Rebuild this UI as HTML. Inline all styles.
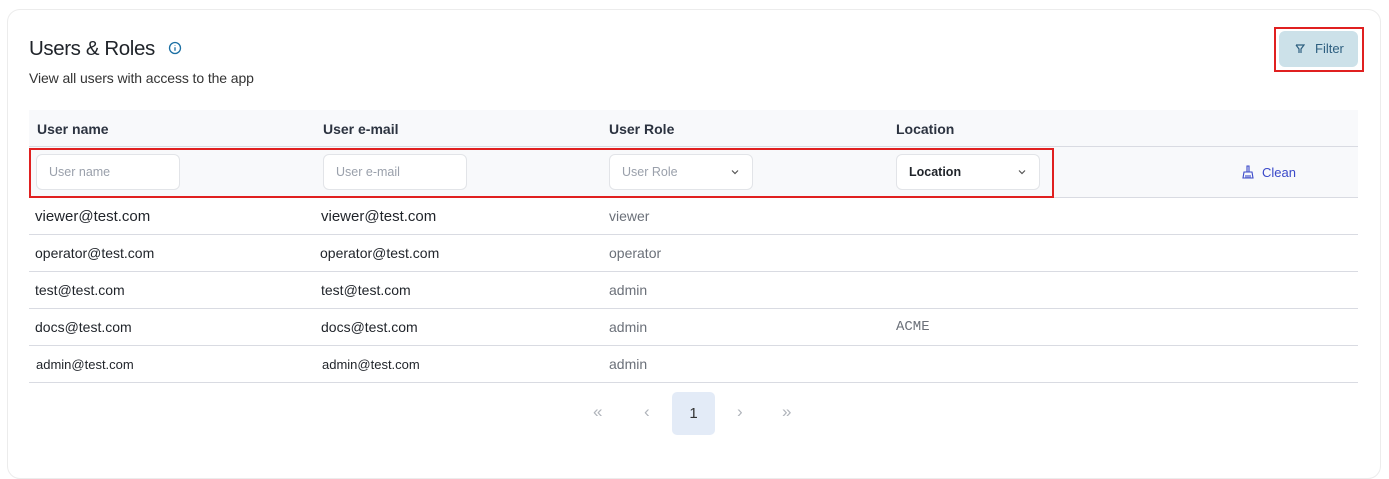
<!DOCTYPE html><html><head><style>
*{box-sizing:border-box;margin:0;padding:0}
body{width:1389px;height:458px;background:#fff;font-family:"Liberation Sans",sans-serif;position:relative;overflow:hidden;color:#1f2329}
.a{position:absolute}
.card{left:7px;top:9px;width:1374px;height:470px;border:1px solid #ececec;border-radius:13px;background:#fff}
.hd{font-size:14px;font-weight:bold;color:#2c3340}
.inp{background:#fff;border:1px solid #e2e4e8;border-radius:6px;height:36px;width:144px;top:154px;font-size:12.5px;color:#9aa0ab;padding:0 12px;line-height:34px}
.r{font-size:14px;color:#1f2329}
.g{font-size:14px;color:#6b7079}
.ln{left:29px;width:1329px;height:1px;background:#d9dbe2}
.chev{position:absolute;right:12px;top:12px}
.pg{font-size:17px;color:#b0b4bb}
</style></head><body>
<div class="a card"></div>
<div class="a" style="left:29px;top:37px;font-size:20.5px;letter-spacing:-0.4px;color:#1f2329">Users &amp; Roles</div>
<svg class="a" style="left:168px;top:41px" width="14" height="14" viewBox="0 0 14 14"><circle cx="7" cy="7" r="5.5" fill="none" stroke="#1b6fa3" stroke-width="1.3"/><path d="M7 6.3v3.5M7 4.2v.6" stroke="#1b6fa3" stroke-width="1.3"/></svg>
<div class="a" style="left:29px;top:70px;font-size:14px;letter-spacing:-0.1px;color:#333">View all users with access to the app</div>
<div class="a" style="left:1274px;top:27px;width:90px;height:45px;border:2px solid #e02020"></div>
<div class="a" style="left:1279px;top:31px;width:79px;height:36px;background:#cce1e9;border-radius:6px;font-size:13px;color:#2d5f80;line-height:36px;padding-left:36px">Filter</div>
<svg class="a" style="left:1295px;top:44px" width="10" height="10" viewBox="0 0 10 10"><path d="M1 1h8L6 5v4M4 9V5L1 1" fill="none" stroke="#2d5f80" stroke-width="1.2"/></svg>
<div class="a" style="left:29px;top:110px;width:1329px;height:87px;background:#f8f9fb"></div>
<div class="a ln" style="top:146px"></div>
<div class="a ln" style="top:197px"></div>
<div class="a hd" style="left:37px;top:121px">User name</div>
<div class="a hd" style="left:323px;top:121px">User e-mail</div>
<div class="a hd" style="left:609px;top:121px">User Role</div>
<div class="a hd" style="left:896px;top:121px">Location</div>
<div class="a" style="left:29px;top:148px;width:1025px;height:50px;border:2px solid #e02020"></div>
<div class="a inp" style="left:36px">User name</div>
<div class="a inp" style="left:323px">User e-mail</div>
<div class="a inp" style="left:609px">User Role<svg class="chev" width="10" height="10" viewBox="0 0 10 10"><path d="M2 3.5l3 3 3-3" fill="none" stroke="#555" stroke-width="1.2"/></svg></div>
<div class="a inp" style="left:896px;color:#1f2329;font-weight:bold;font-size:12.5px">Location<svg class="chev" width="10" height="10" viewBox="0 0 10 10"><path d="M2 3.5l3 3 3-3" fill="none" stroke="#555" stroke-width="1.2"/></svg></div>
<svg class="a" style="left:1242px;top:165px" width="12" height="14" viewBox="0 0 12 14"><path d="M5 1h2v6h3l1 6H1l1-6h3zM2 7h8M4 10v3M6 10v3M8 10v3" fill="none" stroke="#3a49c9" stroke-width="1.1"/></svg>
<div class="a" style="left:1262px;top:165px;font-size:13px;color:#3a49c9">Clean</div>
<div class="a r" style="left:35px;top:208px;font-size:15px">viewer@test.com</div><div class="a r" style="left:321px;top:208px;font-size:15px">viewer@test.com</div><div class="a g" style="left:609px;top:208px">viewer</div>
<div class="a ln" style="top:234px"></div>
<div class="a r" style="left:35px;top:245px">operator@test.com</div><div class="a r" style="left:320px;top:245px">operator@test.com</div><div class="a g" style="left:609px;top:245px">operator</div>
<div class="a ln" style="top:271px"></div>
<div class="a r" style="left:35px;top:282px">test@test.com</div><div class="a r" style="left:321px;top:282px">test@test.com</div><div class="a g" style="left:609px;top:282px">admin</div>
<div class="a ln" style="top:308px"></div>
<div class="a r" style="left:35px;top:319px">docs@test.com</div><div class="a r" style="left:321px;top:319px">docs@test.com</div><div class="a g" style="left:609px;top:319px">admin</div><div class="a g" style="left:896px;top:319px;font-family:'Liberation Mono',monospace">ACME</div>
<div class="a ln" style="top:345px"></div>
<div class="a r" style="left:36px;top:357px;font-size:13px">admin@test.com</div><div class="a r" style="left:322px;top:357px;font-size:13px">admin@test.com</div><div class="a g" style="left:609px;top:356px">admin</div>
<div class="a ln" style="top:382px"></div>
<div class="a pg" style="left:593px;top:402px">«</div>
<div class="a pg" style="left:644px;top:402px">‹</div>
<div class="a" style="left:672px;top:392px;width:43px;height:43px;background:#e3ebf7;border-radius:5px;text-align:center;line-height:43px;font-size:15px;color:#333">1</div>
<div class="a pg" style="left:737px;top:402px">›</div>
<div class="a pg" style="left:782px;top:402px">»</div>
</body></html>
